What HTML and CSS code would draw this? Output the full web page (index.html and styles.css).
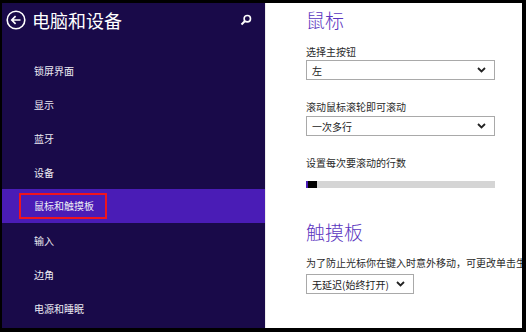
FILE: index.html
```html
<!DOCTYPE html>
<html lang="zh-CN">
<head>
  <meta charset="UTF-8" />
  <title>电脑和设备</title>
  <link rel="stylesheet" href="styles.css">
</head>
<body>
  <div class="frame">
    <aside class="sidebar">
      <header class="side-head">
        <svg class="back" width="20" height="20" viewBox="0 0 20 20">
          <circle cx="10" cy="10" r="8.8" fill="none" stroke="#fff" stroke-width="1.6"/>
          <path d="M14.5 10H5.8M9.6 6.2L5.8 10l3.8 3.8" fill="none" stroke="#fff" stroke-width="1.7"/>
        </svg>
        <h1>电脑和设备</h1>
        <svg class="search" width="12" height="12" viewBox="0 0 12 12">
          <circle cx="7.3" cy="4.7" r="3.2" fill="none" stroke="#fff" stroke-width="1.6"/>
          <path d="M5 7L1.5 10.5" stroke="#fff" stroke-width="2"/>
        </svg>
      </header>
      <nav class="menu">
        <div class="item">锁屏界面</div>
        <div class="item">显示</div>
        <div class="item">蓝牙</div>
        <div class="item">设备</div>
        <div class="item active"><span class="mark">鼠标和触摸板</span></div>
        <div class="item">输入</div>
        <div class="item">边角</div>
        <div class="item">电源和睡眠</div>
      </nav>
    </aside>

    <main class="content">
      <h2 class="title">鼠标</h2>
      <div class="label first">选择主按钮</div>
      <div class="select">
        <span>左</span>
        <svg width="9" height="6" viewBox="0 0 9 6"><path d="M1 1l3.5 3.5L8 1" fill="none" stroke="#222" stroke-width="1.8"/></svg>
      </div>
      <div class="label">滚动鼠标滚轮即可滚动</div>
      <div class="select">
        <span>一次多行</span>
        <svg width="9" height="6" viewBox="0 0 9 6"><path d="M1 1l3.5 3.5L8 1" fill="none" stroke="#222" stroke-width="1.8"/></svg>
      </div>
      <div class="label">设置每次要滚动的行数</div>
      <div class="slider">
        <div class="fill"></div>
        <div class="thumb"></div>
      </div>

      <h2 class="title second">触摸板</h2>
      <div class="desc">为了防止光标你在键入时意外移动，可更改单击生</div>
      <div class="select small">
        <span>无延迟(始终打开)</span>
        <svg width="9" height="6" viewBox="0 0 9 6"><path d="M1 1l3.5 3.5L8 1" fill="none" stroke="#222" stroke-width="1.8"/></svg>
      </div>
    </main>
  </div>
</body>
</html>
```

FILE: styles.css
```css
html, body {
  margin: 0;
  padding: 0;
  background: #000;
  font-family: "Noto Sans CJK SC", "Microsoft YaHei", sans-serif;
}
.frame {
  display: flex;
  width: 520px;
  height: 325px;
  margin: 3px 4px 4px 2px;
  overflow: hidden;
}
.sidebar {
  width: 263px;
  flex: none;
  background: #190a49;
  color: #ecebf3;
}
.side-head {
  display: flex;
  align-items: center;
  height: 34px;
  padding-left: 4px;
}
.side-head h1 {
  margin: 0 0 0 6px;
  font-size: 18px;
  font-weight: 400;
  line-height: 1;
  color: #fff;
}
.search {
  margin-left: auto;
  margin-right: 13px;
}
.menu {
  margin-top: 16px;
}
.item {
  height: 34px;
  display: flex;
  align-items: center;
  padding-left: 32px;
  font-size: 10px;
}
.item.active {
  background: #4a1cb6;
  padding-left: 17px;
}
.mark {
  display: inline-block;
  border: 2px solid #f0141e;
  padding: 4px 11px 4px 13px;
  line-height: 14px;
}
.content {
  flex: 1;
  background: #fff;
  border-left: 1px solid #ececec;
  padding: 5px 0 0 40px;
  color: #2a2a2a;
  overflow: hidden;
}
.title {
  margin: 0;
  font-size: 19px;
  line-height: 24px;
  font-weight: 300;
  color: #5b36c0;
}
.title.second {
  margin-top: 32px;
}
.label {
  font-size: 10px;
  line-height: 14px;
  margin: 20px 0 2px;
}
.label.first {
  margin-top: 13px;
  margin-bottom: 1px;
}
.select {
  box-sizing: border-box;
  width: 189px;
  height: 20px;
  border: 1px solid #a9a9a9;
  display: flex;
  align-items: center;
  justify-content: space-between;
  padding: 0 8px 0 5px;
  font-size: 10px;
  color: #222;
}
.select.small {
  width: 108px;
}
.slider {
  display: flex;
  width: 189px;
  height: 7px;
  margin-top: 11px;
  background: #d5d5d5;
}
.fill {
  width: 2px;
  background: #4a1cb6;
}
.thumb {
  width: 9px;
  background: #000;
}
.desc {
  font-size: 10px;
  line-height: 14px;
  white-space: nowrap;
  margin: 12px 0 4px;
}
```
